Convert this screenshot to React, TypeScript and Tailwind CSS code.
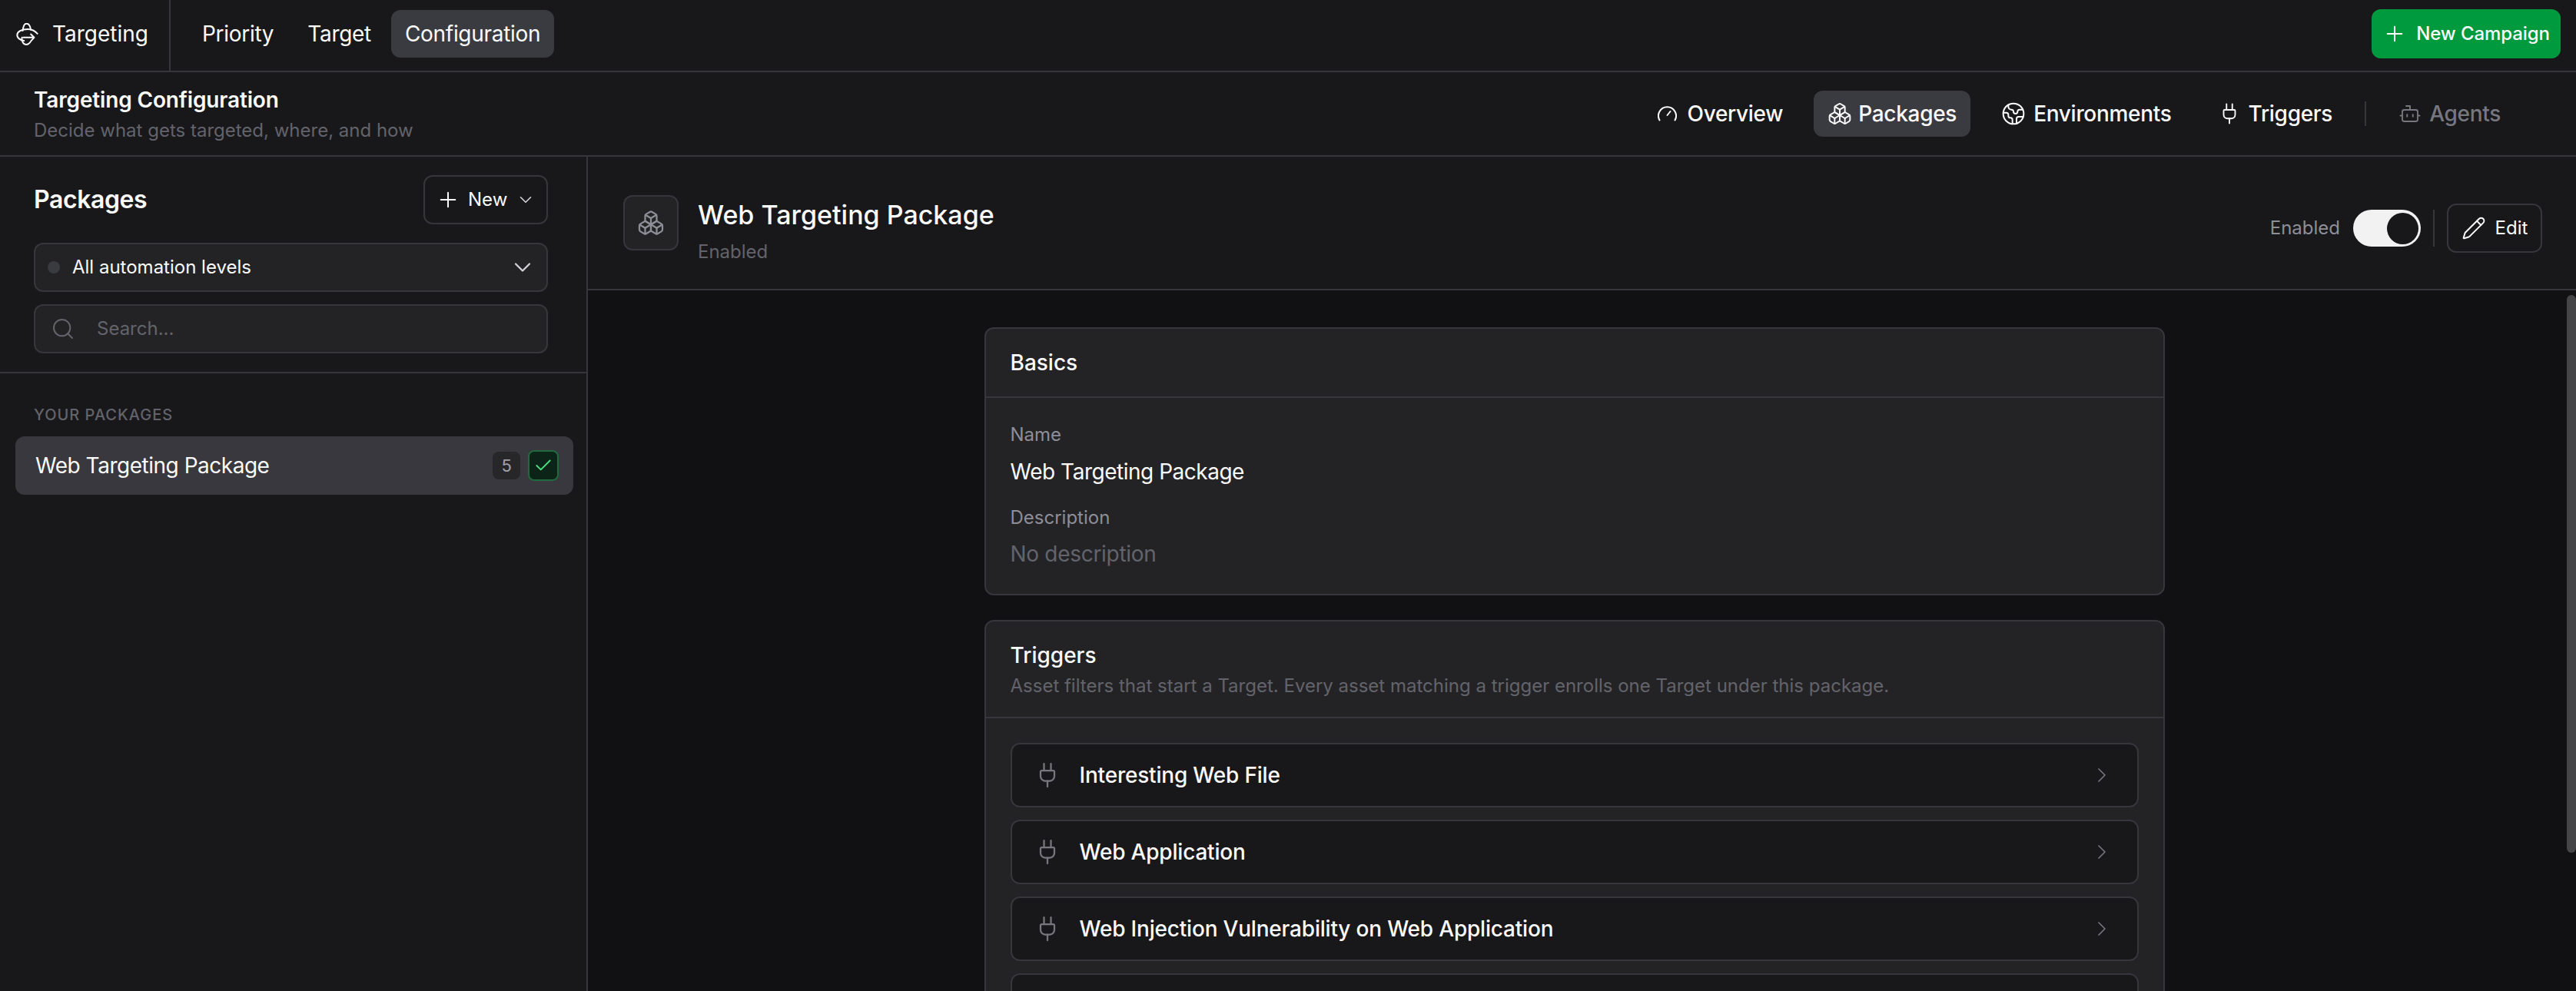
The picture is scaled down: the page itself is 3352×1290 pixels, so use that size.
import {
  Bot,
  Boxes,
  Check,
  ChevronDown,
  ChevronRight,
  Earth,
  Pencil,
  Plug,
  Plus,
  Search,
} from "lucide-react";

const triggers = [
  "Interesting Web File",
  "Web Application",
  "Web Injection Vulnerability on Web Application",
  "",
];

function Logo() {
  return (
    <svg viewBox="35 28 86 88" className="h-[29px] w-[29px] shrink-0" fill="none" stroke="currentColor" strokeWidth="6" strokeLinecap="round" strokeLinejoin="round">
      <path d="M60 58C62 40 68 30 75 30c9 0 15 12 17 25" />
      <path d="M118 70C108 58 95 52 80 52 55 52 38 62 38 75c0 13 14 21 27 23" />
      <path d="M62 85h43M92 72l13 13-13 15" />
      <path d="M57 85c-2 15 5 28 18 28 5 0 10-3 15-10" />
    </svg>
  );
}

function Gauge() {
  return (
    <svg viewBox="0 0 25 20" className="h-5 w-[25px]" fill="none" stroke="currentColor" strokeWidth="2" strokeLinecap="round" strokeLinejoin="round">
      <path d="M2.500 18.500a11.500 11.500 0 1 1 20 0" />
      <path d="m12.500 12 4-5" />
    </svg>
  );
}

export default function App() {
  return (
    <div className="flex h-screen flex-col overflow-hidden bg-[#18181b] font-['Inter',sans-serif] text-[#fafafa]">
      {/* Top bar */}
      <header className="flex h-[94px] shrink-0 items-center border-b-2 border-[#36363c]">
        <div className="flex h-full w-[222px] shrink-0 items-center gap-[18px] border-r-2 border-[#36363c] pb-1 pl-[21px]">
          <Logo />
          <span className="text-[28px]">Targeting</span>
        </div>
        <nav className="mb-1 ml-[23px] flex items-center gap-2 text-[28px] tracking-[-0.3px]">
          <div className="rounded-xl px-[18px] py-[10px]">Priority</div>
          <div className="rounded-xl px-[18px] py-[10px]">Target</div>
          <div className="rounded-xl bg-[#3a3a41] px-[18px] py-[10px]">Configuration</div>
        </nav>
        <button className="mr-5 mb-1 ml-auto flex h-16 w-[246px] items-center justify-center gap-3 rounded-xl bg-[#009a3e] text-2xl font-medium tracking-[-0.1px]">
          <Plus className="size-8" strokeWidth={1.5} />
          New Campaign
        </button>
      </header>

      {/* Section bar */}
      <div className="flex h-[110px] shrink-0 items-center justify-between border-b-2 border-[#36363c] pr-[80px] pl-[44px]">
        <div>
          <div className="text-[28px] leading-10 font-semibold tracking-[-0.15px]">Targeting Configuration</div>
          <div className="mt-1 text-2xl leading-8 text-[#63636b]">Decide what gets targeted, where, and how</div>
        </div>
        <div className="flex items-center gap-6 text-[28px] font-medium tracking-[-0.3px]">
          <div className="flex h-[60px] items-center gap-[14px] pr-4 pl-[18px]">
            <Gauge />
            Overview
          </div>
          <div className="flex h-[60px] items-center gap-2 rounded-xl bg-[#3a3a41] px-[18px]">
            <Boxes className="size-8" strokeWidth={1.5} />
            Packages
          </div>
          <div className="flex h-[60px] items-center gap-[10px] pr-[18px] pl-4">
            <Earth className="size-8" strokeWidth={1.5} />
            Environments
          </div>
          <div className="flex h-[60px] items-center gap-[10px] px-[18px]">
            <Plug className="size-[30px]" strokeWidth={1.5} />
            Triggers
          </div>
          <div className="h-[32px] w-[2px] bg-[#36363c]" />
          <div className="flex h-[60px] items-center gap-[10px] px-[18px] text-[#77777f]">
            <Bot className="size-[30px]" strokeWidth={1.5} />
            Agents
          </div>
        </div>
      </div>

      <div className="flex min-h-0 flex-1">
        {/* Sidebar */}
        <aside className="w-[765px] shrink-0 border-r-2 border-[#36363c]">
          <div className="border-b-2 border-[#36363c] pt-6 pr-[50px] pb-[24px] pl-[44px]">
            <div className="flex items-center justify-between">
              <h2 className="text-[32px] font-semibold tracking-[-0.4px]">Packages</h2>
              <button className="flex h-16 w-[162px] items-center rounded-xl border-2 border-[#36363c] pl-[14px] text-2xl">
                <Plus className="size-8" strokeWidth={1.5} />
                <span className="ml-[10px]">New</span>
                <ChevronDown className="ml-[11px] size-[26px] text-[#d4d4d8]" strokeWidth={1.5} />
              </button>
            </div>
            <div className="mt-6 flex h-16 items-center gap-4 rounded-xl border-2 border-[#36363c] bg-[#232326] pr-[13px] pl-4 text-2xl">
              <span className="size-4 rounded-full bg-[#3a3a41]" />
              All automation levels
              <ChevronDown className="ml-auto size-9 text-[#d4d4d8]" strokeWidth={1.5} />
            </div>
            <div className="mt-4 flex h-16 items-center gap-7 rounded-xl border-2 border-[#36363c] bg-[#232326] pl-5 text-2xl text-[#63636b]">
              <Search className="size-8" strokeWidth={1.5} />
              Search...
            </div>
          </div>
          <div className="px-5 pt-10">
            <div className="px-6 text-xl leading-7 font-medium tracking-wider text-[#63636b]">YOUR PACKAGES</div>
            <div className="mt-[14px] flex h-[76px] w-[726px] items-center rounded-xl bg-[#38383e] pr-[19px] pl-[26px] text-[28px] tracking-[-0.48px]">
              Web Targeting Package
              <span className="ml-auto flex h-9 w-9 items-center justify-center rounded-lg bg-[#27272a] text-[22px] text-[#a1a1aa]">5</span>
              <span className="ml-[10px] flex h-10 w-10 items-center justify-center rounded-lg border-2 border-[#22693f] bg-[#0c2417]">
                <Check className="size-[26px] text-[#4ade80]" strokeWidth={1.75} />
              </span>
            </div>
          </div>
        </aside>

        {/* Main */}
        <main className="relative flex min-w-0 flex-1 flex-col">
          <div className="flex h-[174px] shrink-0 items-center border-b-2 border-[#36363c] pr-11 pl-[46px]">
            <div className="flex size-[72px] items-center justify-center rounded-xl border-2 border-[#36363c] bg-[#232326]">
              <Boxes className="size-9 text-[#8e8e98]" strokeWidth={1.5} />
            </div>
            <div className="ml-[25px] pt-5">
              <div className="text-[34px] leading-[46px] font-medium">Web Targeting Package</div>
              <div className="mt-[9px] text-2xl leading-8 text-[#63636b]">Enabled</div>
            </div>
            <div className="ml-auto flex items-center pt-[14px]">
              <span className="text-2xl text-[#8e8e98]">Enabled</span>
              <div className="ml-[17px] flex h-12 w-[88px] items-center justify-end rounded-full bg-[#f2f2f3] pr-[3px]">
                <span className="size-[41px] rounded-full bg-[#18181b]" />
              </div>
              <div className="mx-4 h-12 w-[2px] bg-[#36363c]" />
              <button className="flex h-16 w-[124px] items-center justify-center gap-3 rounded-xl border-2 border-[#36363c] text-2xl">
                <Pencil className="size-8" strokeWidth={1.5} />
                Edit
              </button>
            </div>
          </div>

          <div className="min-h-0 flex-1 overflow-hidden bg-[#111113] pt-[48px] pr-[20px]">
            <div className="mx-auto w-[1536px] space-y-8">
              <section className="rounded-xl border-2 border-[#36363c] bg-[#232326]">
                <div className="flex h-[90px] items-center border-b-2 border-[#36363c] px-8 text-[28px] font-medium">Basics</div>
                <div className="px-8 pt-8 pb-9">
                  <div className="text-2xl leading-8 text-[#8e8e98]">Name</div>
                  <div className="mt-4 text-[28px] leading-8 tracking-[-0.48px]">Web Targeting Package</div>
                  <div className="mt-7 text-2xl leading-8 text-[#8e8e98]">Description</div>
                  <div className="mt-[15px] text-[28px] leading-8 tracking-[-0.3px] text-[#63636b]">No description</div>
                </div>
              </section>

              <section className="rounded-xl border-2 border-[#36363c] bg-[#232326]">
                <div className="h-[126px] border-b-2 border-[#36363c] px-8 pt-[24px]">
                  <div className="text-[28px] leading-10 font-medium">Triggers</div>
                  <div className="mt-1 text-2xl leading-8 text-[#63636b]">
                    Asset filters that start a Target. Every asset matching a trigger enrolls one Target under this package.
                  </div>
                </div>
                <div className="space-y-4 p-8">
                  {triggers.map((t, i) => (
                    <div key={i} className="flex h-[84px] items-center rounded-xl border-2 border-[#36363c] bg-[#18181b] pr-[30px] pl-7">
                      <Plug className="size-9 text-[#77777f]" strokeWidth={1.5} />
                      <span className="ml-6 text-[28px] font-medium tracking-[-0.2px]">{t}</span>
                      <ChevronRight className="ml-auto size-8 text-[#77777f]" strokeWidth={1.25} />
                    </div>
                  ))}
                </div>
              </section>
            </div>
          </div>

          {/* Scrollbar thumb */}
          <div className="absolute top-[180px] right-0 h-[726px] w-3 rounded-full bg-[#454547]" />
        </main>
      </div>
    </div>
  );
}
